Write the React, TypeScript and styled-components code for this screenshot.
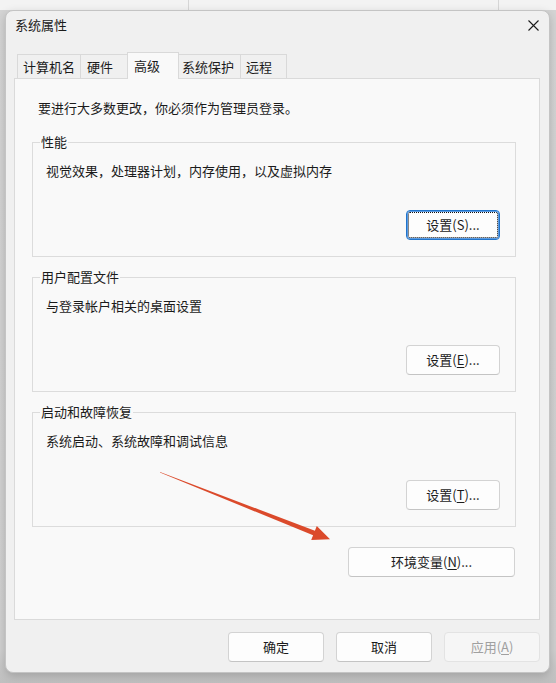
import React from "react";
import styled, { createGlobalStyle, css } from "styled-components";

const Global = createGlobalStyle`
  html, body { margin: 0; padding: 0; }
  body {
    font-family: "Noto Sans CJK SC", "Noto Sans", "Liberation Sans", sans-serif;
    font-size: 13px;
    color: #1b1b1b;
  }
  * { box-sizing: border-box; }
`;

const Page = styled.div`
  position: relative;
  width: 556px;
  height: 683px;
  overflow: hidden;
  padding: 10px 0 0 5px;
  background:
    linear-gradient(to right, transparent 188px, #d6d6d6 188px, #d6d6d6 189px, transparent 189px, transparent 498px, #d6d6d6 498px, #d6d6d6 499px, transparent 499px) top left / 100% 10px no-repeat,
    linear-gradient(#f3f3f3 0, #f3f3f3 10px, #d4d4d4 10px, #d0d0d0 650px, #bfbfbf 683px);
`;

const Dialog = styled.div`
  width: 545px;
  height: 663px;
  background: #f0f0f0;
  border: 1px solid #c4c4c4;
  border-radius: 8px;
  box-shadow: 0 3px 10px rgba(0, 0, 0, 0.18);
  display: flex;
  flex-direction: column;
`;

const TitleBar = styled.div`
  height: 28px;
  display: flex;
  align-items: center;
  justify-content: space-between;
  padding-left: 9px;
  font-size: 13px;
  line-height: 18px;
`;

const CloseBtn = styled.div`
  width: 28px;
  height: 28px;
  margin-right: 2px;
  display: flex;
  align-items: center;
  justify-content: center;
`;

const Body = styled.div`
  margin-top: 13px;
  padding: 0 9px 0 8px;
`;

const TabStrip = styled.div`
  display: flex;
  align-items: flex-end;
  margin-left: 3px;
  height: 26px;
`;

const Tab = styled.div<{ $w: number; $pad: number; $active?: boolean }>`
  width: ${(p) => p.$w}px;
  padding-left: ${(p) => p.$pad}px;
  height: 24px;
  display: flex;
  align-items: center;
  border: 1px solid #d9d9d9;
  border-bottom: none;
  background: #f0f0f0;
  font-size: 13px;
  line-height: 18px;
  white-space: nowrap;
  & + & { margin-left: -1px; }
  ${(p) =>
    p.$active &&
    css`
      height: 27px;
      margin-bottom: -1px;
      padding-bottom: 1px;
      background: #f9f9f9;
      position: relative;
      z-index: 1;
    `}
`;

const Panel = styled.div`
  height: 542px;
  border: 1px solid #dadada;
  background: #f9f9f9;
  padding: 20px 23px 0 17px;
  display: flex;
  flex-direction: column;
`;

const Intro = styled.p`
  margin: 0 0 0 6px;
  line-height: 18px;
`;

const Group = styled.fieldset<{ $gap: number }>`
  margin: ${(p) => p.$gap}px 0 0 0;
  padding: 0 15px 16px 13px;
  border: 1px solid #dcdcdc;
  min-width: 0;
`;

const Legend = styled.legend`
  padding: 0 1px;
  margin-left: -6px;
  line-height: 16px;
  font-size: 13px;
`;

const GroupBody = styled.div`
  padding-top: 12px;
  display: flex;
  flex-direction: column;
`;

const Desc = styled.div`
  line-height: 18px;
`;

const Button = styled.div<{ $w: number; $focused?: boolean; $disabled?: boolean }>`
  width: ${(p) => p.$w}px;
  height: 30px;
  display: flex;
  align-items: center;
  justify-content: center;
  background: #fdfdfd;
  border: 1px solid #d3d3d3;
  border-bottom-color: #c4c4c4;
  border-radius: 4px;
  font-size: 13px;
  line-height: 18px;
  color: #1b1b1b;
  ${(p) =>
    p.$focused &&
    css`
      border: 1px solid #1f74cc;
      box-shadow: inset 0 0 0 1px #5d9be0;
      outline: 1px dotted #111;
      outline-offset: -3px;
    `}
  ${(p) =>
    p.$disabled &&
    css`
      background: #f6f6f6;
      border-color: #e3e3e3;
      color: #a0a0a0;
    `}
`;

const GroupButton = styled(Button)`
  margin-top: 30px;
  align-self: flex-end;
`;

const EnvButton = styled(Button)`
  margin-top: 20px;
  margin-right: 1px;
  align-self: flex-end;
`;

const Mn = styled.span`
  text-decoration: underline;
  text-underline-offset: 2px;
`;

const ButtonRow = styled.div`
  margin-top: 12px;
  padding-right: 9px;
  display: flex;
  justify-content: flex-end;
  gap: 12px;
`;

const ArrowSvg = styled.svg`
  position: absolute;
  left: 0;
  top: 0;
  pointer-events: none;
`;

export default function App() {
  return (
    <>
      <Global />
      <Page>
        <Dialog>
          <TitleBar>
            <span>系统属性</span>
            <CloseBtn>
              <svg width="11" height="11" viewBox="0 0 11 11">
                <path d="M0.5 0.5 L10.5 10.5 M10.5 0.5 L0.5 10.5" stroke="#1b1b1b" strokeWidth="1.1" fill="none" />
              </svg>
            </CloseBtn>
          </TitleBar>
          <Body>
            <TabStrip>
              <Tab $w={64} $pad={5}>计算机名</Tab>
              <Tab $w={48} $pad={6}>硬件</Tab>
              <Tab $w={52} $pad={6} $active>高级</Tab>
              <Tab $w={63} $pad={3}>系统保护</Tab>
              <Tab $w={47} $pad={5}>远程</Tab>
            </TabStrip>
            <Panel>
              <Intro>要进行大多数更改，你必须作为管理员登录。</Intro>
              <Group $gap={17}>
                <Legend>性能</Legend>
                <GroupBody>
                  <Desc>视觉效果，处理器计划，内存使用，以及虚拟内存</Desc>
                  <GroupButton $w={94} $focused>设置(S)...</GroupButton>
                </GroupBody>
              </Group>
              <Group $gap={12}>
                <Legend>用户配置文件</Legend>
                <GroupBody>
                  <Desc>与登录帐户相关的桌面设置</Desc>
                  <GroupButton $w={94}>
                    设置(<Mn>E</Mn>)...
                  </GroupButton>
                </GroupBody>
              </Group>
              <Group $gap={12}>
                <Legend>启动和故障恢复</Legend>
                <GroupBody>
                  <Desc>系统启动、系统故障和调试信息</Desc>
                  <GroupButton $w={94}>
                    设置(<Mn>T</Mn>)...
                  </GroupButton>
                </GroupBody>
              </Group>
              <EnvButton $w={167}>
                环境变量(<Mn>N</Mn>)...
              </EnvButton>
            </Panel>
          </Body>
          <ButtonRow>
            <Button $w={96}>确定</Button>
            <Button $w={96}>取消</Button>
            <Button $w={96} $disabled>
              应用(<Mn>A</Mn>)
            </Button>
          </ButtonRow>
        </Dialog>
        <ArrowSvg width="556" height="683" viewBox="0 0 556 683">
          <polygon
            points="160,472 314.9,530.7 316.8,526 330,539.3 311.2,540 313.1,535.3 160,472.6"
            fill="#db4a2b"
          />
        </ArrowSvg>
      </Page>
    </>
  );
}
